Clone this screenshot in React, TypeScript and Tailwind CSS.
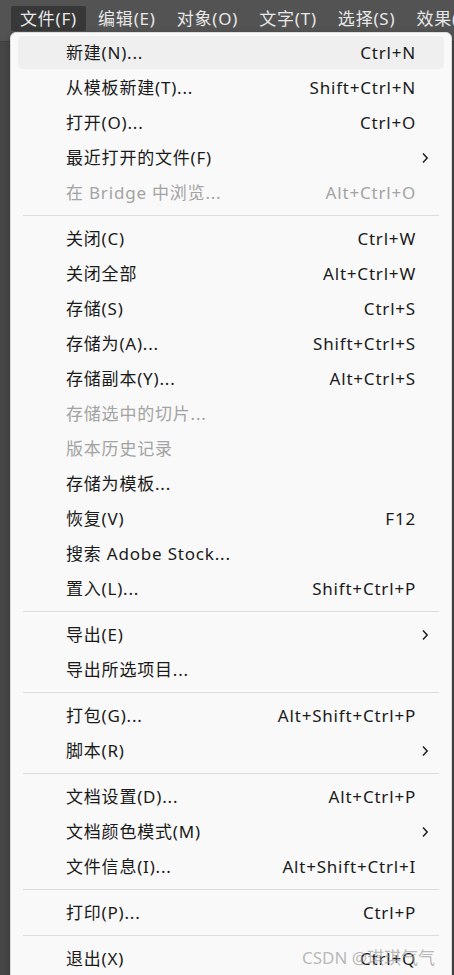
import React from 'react';

type Item =
    | { kind: 'item'; label: string; shortcut?: string; disabled?: boolean; submenu?: boolean; active?: boolean }
    | { kind: 'sep' };

const font = { fontFamily: '"Noto Sans", "Noto Sans CJK SC", sans-serif' };

const menus = ['文件(F)', '编辑(E)', '对象(O)', '文字(T)', '选择(S)', '效果(C)'];

const items: Item[] = [
    { kind: 'item', label: '新建(N)...', shortcut: 'Ctrl+N', active: true },
    { kind: 'item', label: '从模板新建(T)...', shortcut: 'Shift+Ctrl+N' },
    { kind: 'item', label: '打开(O)...', shortcut: 'Ctrl+O' },
    { kind: 'item', label: '最近打开的文件(F)', submenu: true },
    { kind: 'item', label: '在 Bridge 中浏览...', shortcut: 'Alt+Ctrl+O', disabled: true },
    { kind: 'sep' },
    { kind: 'item', label: '关闭(C)', shortcut: 'Ctrl+W' },
    { kind: 'item', label: '关闭全部', shortcut: 'Alt+Ctrl+W' },
    { kind: 'item', label: '存储(S)', shortcut: 'Ctrl+S' },
    { kind: 'item', label: '存储为(A)...', shortcut: 'Shift+Ctrl+S' },
    { kind: 'item', label: '存储副本(Y)...', shortcut: 'Alt+Ctrl+S' },
    { kind: 'item', label: '存储选中的切片...', disabled: true },
    { kind: 'item', label: '版本历史记录', disabled: true },
    { kind: 'item', label: '存储为模板...' },
    { kind: 'item', label: '恢复(V)', shortcut: 'F12' },
    { kind: 'item', label: '搜索 Adobe Stock...' },
    { kind: 'item', label: '置入(L)...', shortcut: 'Shift+Ctrl+P' },
    { kind: 'sep' },
    { kind: 'item', label: '导出(E)', submenu: true },
    { kind: 'item', label: '导出所选项目...' },
    { kind: 'sep' },
    { kind: 'item', label: '打包(G)...', shortcut: 'Alt+Shift+Ctrl+P' },
    { kind: 'item', label: '脚本(R)', submenu: true },
    { kind: 'sep' },
    { kind: 'item', label: '文档设置(D)...', shortcut: 'Alt+Ctrl+P' },
    { kind: 'item', label: '文档颜色模式(M)', submenu: true },
    { kind: 'item', label: '文件信息(I)...', shortcut: 'Alt+Shift+Ctrl+I' },
    { kind: 'sep' },
    { kind: 'item', label: '打印(P)...', shortcut: 'Ctrl+P' },
    { kind: 'sep' },
    { kind: 'item', label: '退出(X)', shortcut: 'Ctrl+Q' },
];

function Chevron() {
    return (
        <svg width="8" height="12" viewBox="0 0 8 12" fill="none">
            <path d="M2 1.5 L6.2 6 L2 10.5" stroke="#1f1f1f" strokeWidth="1.5" />
        </svg>
    );
}

export default function App() {
    return (
        <div className="relative w-[454px] h-[975px] overflow-hidden bg-[#464646] tracking-[0.8px]" style={font}>
            {/* Menu bar */}
            <div className="h-[42px] bg-[#535353] border-b border-[#3d3d3d] flex items-start pt-[6px] pl-[11px] gap-[3px]">
                {menus.map((m, i) => (
                    <div
                        key={m}
                        className={
                            'h-[25px] px-[9px] flex items-center text-[17px] text-[#e8e8e8] whitespace-nowrap rounded-[2px] ' +
                            (i === 0 ? 'bg-[#383838]' : '')
                        }
                    >
                        {m}
                    </div>
                ))}
            </div>

            {/* Dropdown */}
            <div className="absolute left-[10px] top-[32px] w-[442px] h-[960px] bg-[#f9f9f9] border border-[#dcdcdc] rounded-[6px] shadow-[0_2px_6px_rgba(0,0,0,0.25)] pt-[2px]">
                {items.map((it, i) =>
                    it.kind === 'sep' ? (
                        <div key={i} className="h-[11px] flex items-center px-[12px]">
                            <div className="h-px w-full bg-[#dcdcdc]" />
                        </div>
                    ) : (
                        <div key={i} className="h-[35px] px-[7px] py-[1px]">
                            <div
                                className={
                                    'h-full rounded-[5px] flex items-center pl-[48px] pr-[28px] text-[17px] ' +
                                    (it.active ? 'bg-[#efefef] ' : '') +
                                    (it.disabled ? 'text-[#a3a3a3]' : 'text-[#1a1a1a]')
                                }
                            >
                                <span className="flex-1 whitespace-nowrap">{it.label}</span>
                                {it.shortcut && <span className="whitespace-nowrap">{it.shortcut}</span>}
                                {it.submenu && (
                                    <span className="mr-[-13px] flex items-center">
                                        <Chevron />
                                    </span>
                                )}
                            </div>
                        </div>
                    )
                )}
            </div>

            {/* Watermark */}
            <div className="absolute left-[302px] top-[945px] text-[17px] tracking-normal text-[#9a9a9a]/70 whitespace-nowrap">
                CSDN @琪琪气气
            </div>
        </div>
    );
}
